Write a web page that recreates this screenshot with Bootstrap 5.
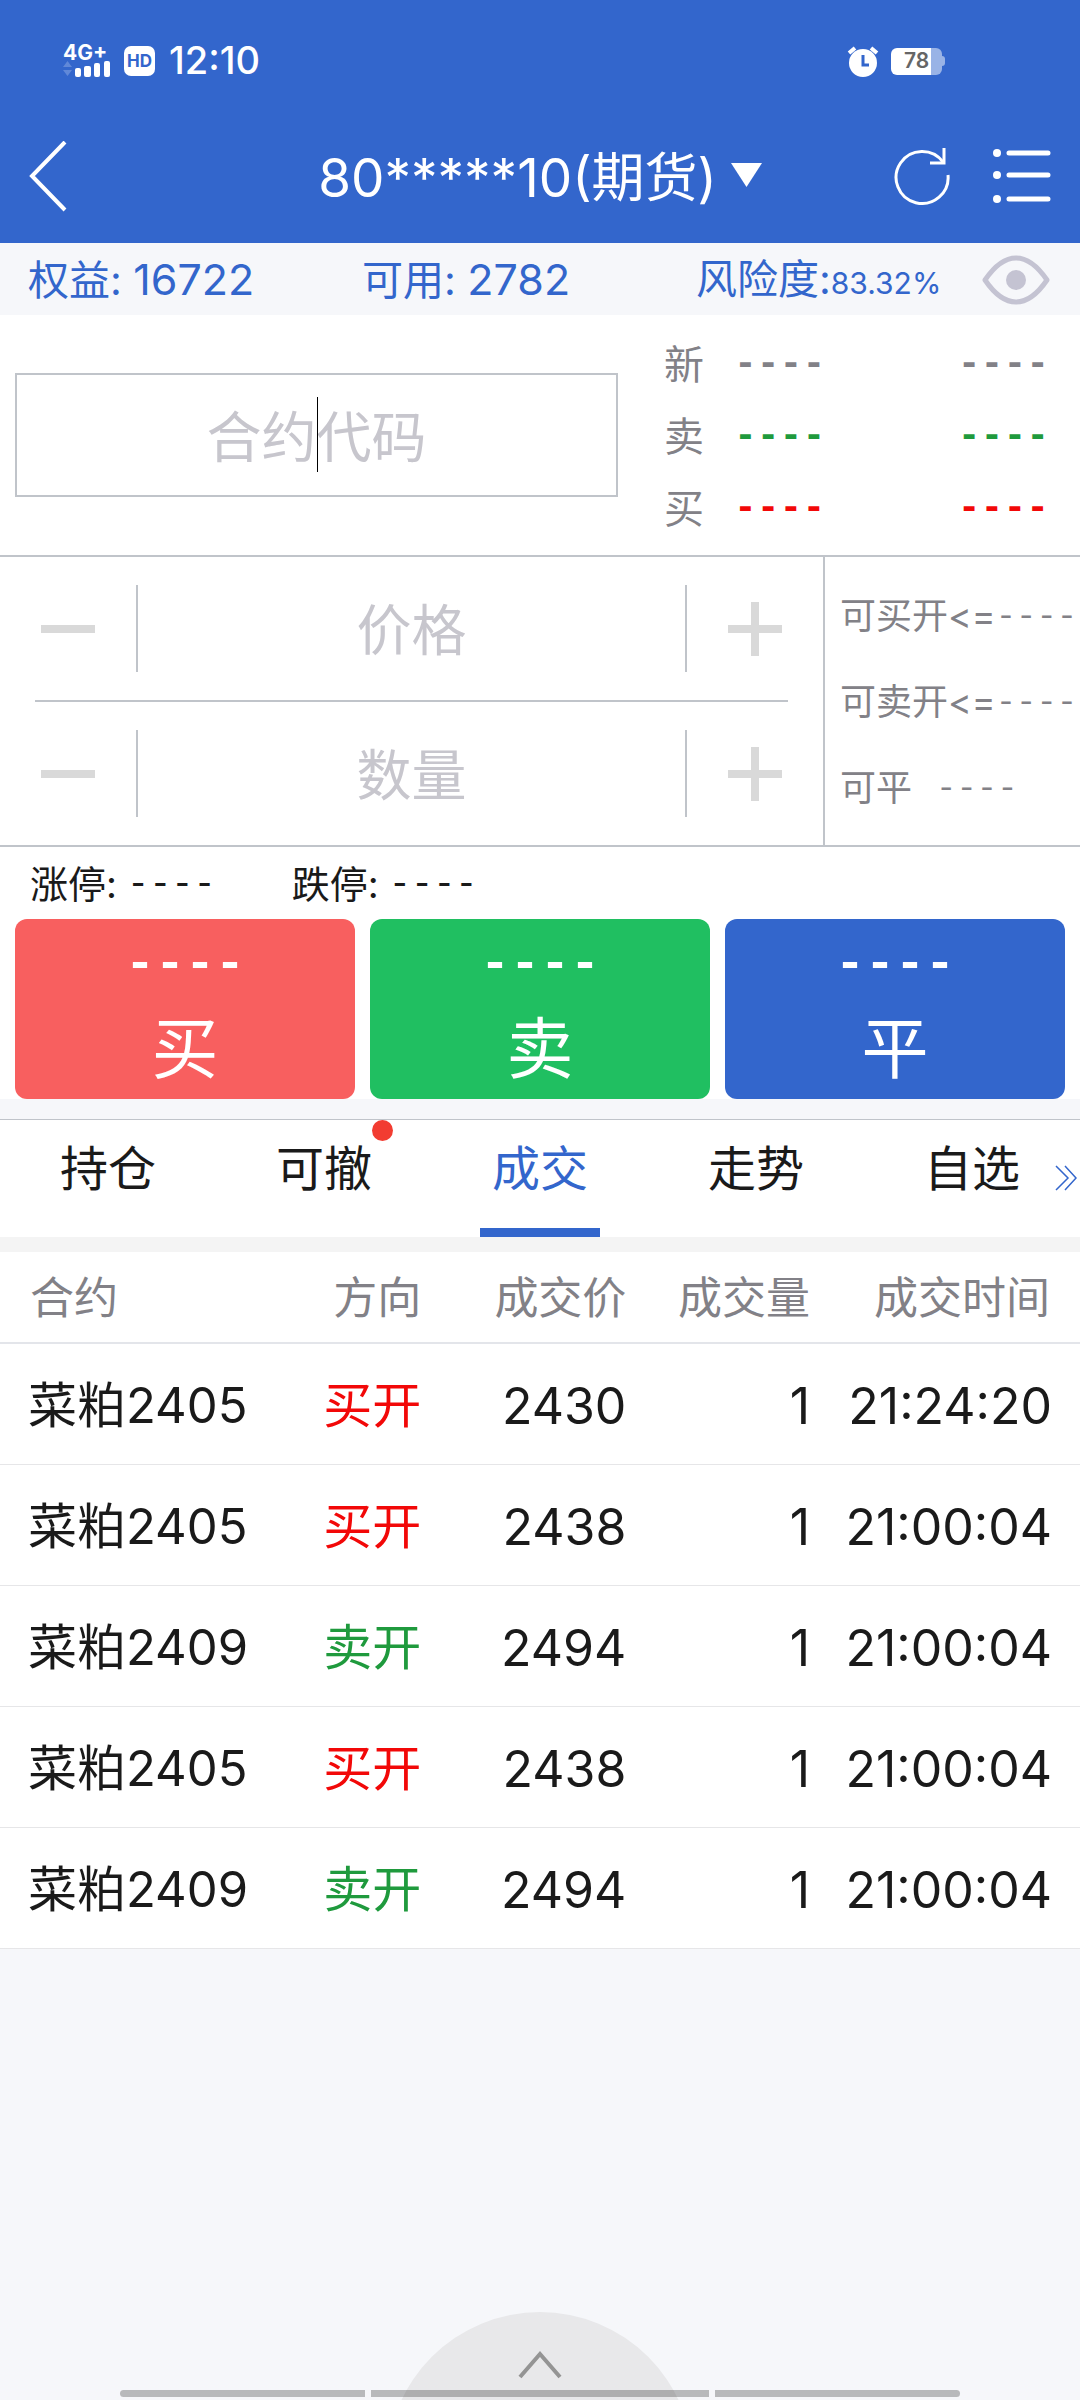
<!DOCTYPE html>
<html lang="zh-CN">
<head>
<meta charset="utf-8">
<meta name="viewport" content="width=device-width, initial-scale=1">
<title>期货交易</title>
<link href="https://cdn.jsdelivr.net/npm/bootstrap@5.3.0/dist/css/bootstrap.min.css" rel="stylesheet">
<style>
  :root { --blue: #3366cc; --line: #c0c4ca; --muted: #828187; --hint: #c7c6cd; --ink: #1a1a1a; --up: #f20808; --down: #1f9a3d; --page: #f6f7fa; }
  body { font-family: Inter, "Noto Sans CJK SC", sans-serif; color: var(--ink); background: var(--page); font-size: 48px; line-height: 1.2; }
  svg { display: block; flex: none; }
  button { font: inherit; color: inherit; background: none; border: 0; padding: 0; }
  .dashes { font-family: "Liberation Mono", monospace; line-height: 1; }

  .app-head { background: var(--blue); color: #fff; }
  .status-row { height: 110px; padding: 12px 135px 0 63px; font-size: 38px; font-weight: 500; }
  .status-left { gap: 14px; }
  .net-label { font-size: 21px; line-height: 16px; font-weight: 700; }
  .hd-tag { width: 31px; height: 30px; border-radius: 7px; background: #fff; color: var(--blue); font-size: 17px; font-weight: 700; }
  .battery { width: 51px; height: 27px; border-radius: 6px; background: linear-gradient(90deg, #fff 78%, #99b3e6 78%); color: #666; font-size: 21px; font-weight: 600; }
  .battery-tip { width: 3px; height: 10px; border-radius: 0 3px 3px 0; background: #99b3e6; }
  .title-row { display: grid; grid-template-columns: 1fr auto 1fr; align-items: center; height: 133px; padding: 0 28px; }
  .account { font-size: 53px; gap: 14px; padding-top: 4px; }
  .head-tools { gap: 42px; }

  .funds { height: 72px; padding: 1px 30px 0 28px; color: var(--blue); font-size: 41px; }
  .funds .fund-item { flex: 0 0 334px; }
  .amount { font-size: 43px; }
  .risk-rate { font-size: 30px; }

  .sheet { background: #fff; }
  .quote { height: 242px; border-bottom: 2px solid var(--line); padding-left: 15px; }
  .code-box { flex: 1 1 0; }
  .code-input { height: 124px; border: 2px solid var(--line); border-radius: 0; text-align: center; font-size: 55px; padding: 3px 0 0; }
  .code-box::after { content: ""; position: absolute; left: 50%; top: 24px; width: 1px; height: 75px; background: #000; }
  .code-input::placeholder, .step-input::placeholder { color: var(--hint); opacity: 1; }
  .quote-list { flex: 0 0 462px; padding: 3px 31px 0 46px; font-size: 40px; color: var(--muted); }
  .quote-list li { height: 72px; }
  .quote-list .dashes { font-size: 38px; font-weight: 700; }
  .quote-list .tag-name { width: 70px; }

  .ticket { border-bottom: 2px solid var(--line); }
  .step-row { height: 143px; }
  .step-row button { flex: 0 0 136px; }
  .step-input { height: 87px; border: solid var(--line); border-width: 0 2px; border-radius: 0; text-align: center; font-size: 55px; padding: 3px 0 0; min-width: 0; }
  .step-rule { height: 2px; margin: 0 35px; background: var(--line); }
  .caps { flex: 0 0 257px; border-left: 2px solid var(--line); padding: 3px 0 0 15px; font-size: 36px; color: var(--muted); white-space: nowrap; }
  .caps li { height: 86px; }
  .caps .dashes { font-size: 34px; }

  .limits { height: 72px; padding: 3px 30px 0; font-size: 38px; gap: 76px; }
  .limits .dashes { font-size: 37px; margin-left: 10px; }
  .trade-row { display: grid; grid-template-columns: repeat(3, 1fr); gap: 15px; padding: 0 15px; }
  .trade-btn { height: 180px; border-radius: 12px; color: #fff; font-size: 67px; line-height: 78px; padding-top: 20px; }
  .trade-btn .dashes { font-size: 50px; line-height: 52px; font-weight: 700; margin-bottom: 19px; }
  .buy { background: #f85f5f; } .sell { background: #20bf61; } .flat { background: var(--blue); }

  .tab-strip { margin-top: 20px; border-top: 1px solid var(--line); border-bottom: 15px solid #f4f4f4; }
  .tab-strip .nav-link { color: var(--ink); height: 117px; padding: 0; font-size: 48px; line-height: 98px; border-radius: 0; }
  .tab-strip .nav-link.active { color: var(--blue); }
  .tab-strip .nav-link.active::after { content: ""; position: absolute; left: 50%; bottom: 0; width: 120px; height: 9px; margin-left: -60px; background: var(--blue); }
  .new-dot { position: absolute; left: 156px; top: 0; width: 21px; height: 21px; border-radius: 50%; background: #f23c31; }
  .more-tabs { position: absolute; right: 3px; top: 45px; }

  .deals { table-layout: fixed; width: 100%; border-collapse: collapse; white-space: nowrap; }
  .deals th { height: 91px; padding: 3px 0 0; border-bottom: 2px solid #e3e5ea; font-size: 44px; font-weight: 400; color: var(--muted); }
  .deals td { height: 121px; padding: 5px 0 0; border-bottom: 1px solid #e6e6e8; font-size: 49px; }
  .deals td.num-cell { font-size: 50px; }
  .deals tr > :first-child { padding-left: 28px; }
  .deals tr > :last-child { padding-right: 28px; }
  .deals tr > th:first-child, .deals tr > th:last-child { padding-left: 30px; padding-right: 30px; }
  .is-up { color: var(--up); } .is-down { color: var(--down); }

  .dock { height: 88px; }
  .drawer-knob { position: absolute; left: 50%; top: 0; width: 306px; height: 306px; margin-left: -153px; border-radius: 50%; background: #e8e8ea; }
  .drawer-knob svg { margin: 38px auto 0; }
  .sys-bar { position: absolute; left: 0; right: 0; bottom: 3px; padding: 0 120px; gap: 6px; }
  .sys-bar i { height: 7px; background: rgba(0,0,0,.25); flex: 245 1 0; }
  .sys-bar i:nth-child(2) { flex-grow: 338; }
  .sys-bar i:first-child { border-radius: 4px 0 0 4px; } .sys-bar i:last-child { border-radius: 0 4px 4px 0; }
</style>
</head>
<body>
<div class="d-flex flex-column min-vh-100">
  <header class="app-head">
    <div class="status-row d-flex align-items-center justify-content-between">
      <div class="status-left d-flex align-items-center">
        <div class="d-flex flex-column">
          <span class="net-label">4G+</span>
          <svg width="47" height="16" viewBox="0 0 47 16" aria-hidden="true"><path d="M0 6 4.500 0 9 6zM0 9h9l-4.500 6z" fill="#6088d8"/><g fill="#fff"><rect x="12" y="7" width="6" height="9" rx="2"/><rect x="21" y="5" width="7" height="11" rx="2"/><rect x="31" y="2" width="6" height="14" rx="2"/><rect x="41" y="0" width="6" height="16" rx="2"/></g></svg>
        </div>
        <span class="hd-tag d-flex align-items-center justify-content-center">HD</span>
        <span>12:10</span>
      </div>
      <div class="d-flex align-items-center">
        <svg class="me-2" width="32" height="32" viewBox="0 0 32 32" aria-label="闹钟"><circle cx="16" cy="18" r="14" fill="#fff"/><path d="M2 8 8 3M30 8l-6-5" stroke="#fff" stroke-width="4"/><path d="M16 10v10h6" fill="none" stroke="#3366cc" stroke-width="3"/></svg>
        <span class="battery d-flex align-items-center justify-content-center ms-1">78</span><span class="battery-tip"></span>
      </div>
    </div>
    <div class="title-row">
      <button type="button" class="text-start" aria-label="返回"><svg width="40" height="72" viewBox="0 0 40 72"><path d="M37 1 4 35l33 34" fill="none" stroke="#fff" stroke-width="4"/></svg></button>
      <button type="button" class="account d-flex align-items-center">80*****10(期货)<svg width="31" height="32" viewBox="0 0 31 32"><path d="M0 0h31L15.500 24z" fill="#fff"/></svg></button>
      <div class="head-tools d-flex align-items-center justify-content-end">
        <button type="button" aria-label="刷新"><svg width="56" height="58" viewBox="0 0 56 58"><path d="M54 27A26 26 0 1 1 49 14" fill="none" stroke="#fff" stroke-width="3"/><path d="M36 15h14V0" fill="none" stroke="#fff" stroke-width="3"/></svg></button>
        <button type="button" aria-label="菜单"><svg width="60" height="58" viewBox="0 0 60 58"><g fill="#fff"><circle cx="5" cy="5" r="4"/><circle cx="5" cy="27" r="4"/><circle cx="5" cy="51" r="4"/></g><path d="M17 5h39M17 27h39M17 51h39" stroke="#fff" stroke-width="5" stroke-linecap="round"/></svg></button>
      </div>
    </div>
  </header>

  <section class="funds d-flex align-items-center">
    <div class="fund-item">权益: <span class="amount">16722</span></div>
    <div class="fund-item">可用: <span class="amount">2782</span></div>
    <div class="text-nowrap">风险度:<span class="risk-rate">83.32%</span></div>
    <button type="button" class="ms-auto" aria-label="显示或隐藏资金"><svg width="68" height="50" viewBox="0 0 68 50"><path d="M3 25Q18 3 34 3t31 22Q50 47 34 47T3 25z" fill="none" stroke="#c4c3d2" stroke-width="5" stroke-linejoin="round"/><circle cx="34" cy="25" r="10" fill="#c4c3d2"/></svg></button>
  </section>

  <section class="sheet">
    <div class="quote d-flex align-items-center">
      <div class="code-box position-relative">
        <input class="code-input form-control shadow-none" type="text" placeholder="合约代码" aria-label="合约代码">
      </div>
      <ul class="quote-list list-unstyled mb-0">
        <li class="d-flex align-items-center"><span class="tag-name">新</span><span class="dashes">----</span><span class="dashes ms-auto">----</span></li>
        <li class="d-flex align-items-center"><span class="tag-name">卖</span><span class="dashes is-down">----</span><span class="dashes is-down ms-auto">----</span></li>
        <li class="d-flex align-items-center"><span class="tag-name">买</span><span class="dashes is-up">----</span><span class="dashes is-up ms-auto">----</span></li>
      </ul>
    </div>

    <div class="ticket d-flex">
      <div class="flex-grow-1">
        <div class="step-row d-flex align-items-center">
          <button type="button" aria-label="价格减"><svg class="mx-auto" width="54" height="54" viewBox="0 0 54 54"><path d="M0 27h54" stroke="#d9d9d9" stroke-width="8"/></svg></button>
          <input class="step-input form-control shadow-none" type="text" placeholder="价格" aria-label="价格">
          <button type="button" aria-label="价格加"><svg class="mx-auto" width="54" height="54" viewBox="0 0 54 54"><path d="M0 27h54M27 0v54" stroke="#d9d9d9" stroke-width="8"/></svg></button>
        </div>
        <div class="step-rule"></div>
        <div class="step-row d-flex align-items-center">
          <button type="button" aria-label="数量减"><svg class="mx-auto" width="54" height="54" viewBox="0 0 54 54"><path d="M0 27h54" stroke="#d9d9d9" stroke-width="8"/></svg></button>
          <input class="step-input form-control shadow-none" type="text" placeholder="数量" aria-label="数量">
          <button type="button" aria-label="数量加"><svg class="mx-auto" width="54" height="54" viewBox="0 0 54 54"><path d="M0 27h54M27 0v54" stroke="#d9d9d9" stroke-width="8"/></svg></button>
        </div>
      </div>
      <ul class="caps list-unstyled mb-0 d-flex flex-column justify-content-center">
        <li class="d-flex align-items-center">可买开&lt;=<span class="dashes">----</span></li>
        <li class="d-flex align-items-center">可卖开&lt;=<span class="dashes">----</span></li>
        <li class="d-flex align-items-center">可平<span class="dashes ms-4">----</span></li>
      </ul>
    </div>

    <div class="limits d-flex align-items-center">
      <div class="d-flex align-items-center">涨停:<span class="dashes">----</span></div>
      <div class="d-flex align-items-center">跌停:<span class="dashes">----</span></div>
    </div>
    <div class="trade-row">
      <button type="button" class="trade-btn buy d-flex flex-column align-items-center"><span class="dashes">----</span>买</button>
      <button type="button" class="trade-btn sell d-flex flex-column align-items-center"><span class="dashes">----</span>卖</button>
      <button type="button" class="trade-btn flat d-flex flex-column align-items-center"><span class="dashes">----</span>平</button>
    </div>
  </section>

  <nav class="tab-strip sheet position-relative" aria-label="列表">
    <div class="nav nav-justified flex-nowrap">
      <a class="nav-link position-relative" href="#">持仓</a>
      <a class="nav-link position-relative" href="#">可撤<span class="new-dot"></span></a>
      <a class="nav-link position-relative active" aria-current="page" href="#">成交</a>
      <a class="nav-link position-relative" href="#">走势</a>
      <a class="nav-link position-relative" href="#">自选</a>
    </div>
    <svg class="more-tabs" width="22" height="26" viewBox="0 0 22 26" aria-hidden="true"><path d="M1 1l12 12L1 25M10 1l11 12L10 25" fill="none" stroke="#3366cc" stroke-width="1.500"/></svg>
  </nav>

  <table class="deals sheet">
    <colgroup><col style="width:24%"><col style="width:15%"><col style="width:19%"><col style="width:17%"><col style="width:25%"></colgroup>
    <thead><tr><th scope="col">合约</th><th scope="col" class="text-end">方向</th><th scope="col" class="text-end">成交价</th><th scope="col" class="text-end">成交量</th><th scope="col" class="text-end">成交时间</th></tr></thead>
    <tbody>
      <tr><td>菜粕2405</td><td class="text-end is-up">买开</td><td class="num-cell text-end">2430</td><td class="num-cell text-end">1</td><td class="num-cell text-end">21:24:20</td></tr>
      <tr><td>菜粕2405</td><td class="text-end is-up">买开</td><td class="num-cell text-end">2438</td><td class="num-cell text-end">1</td><td class="num-cell text-end">21:00:04</td></tr>
      <tr><td>菜粕2409</td><td class="text-end is-down">卖开</td><td class="num-cell text-end">2494</td><td class="num-cell text-end">1</td><td class="num-cell text-end">21:00:04</td></tr>
      <tr><td>菜粕2405</td><td class="text-end is-up">买开</td><td class="num-cell text-end">2438</td><td class="num-cell text-end">1</td><td class="num-cell text-end">21:00:04</td></tr>
      <tr><td>菜粕2409</td><td class="text-end is-down">卖开</td><td class="num-cell text-end">2494</td><td class="num-cell text-end">1</td><td class="num-cell text-end">21:00:04</td></tr>
    </tbody>
  </table>

  <footer class="dock position-relative overflow-hidden mt-auto">
    <button type="button" class="drawer-knob d-flex align-items-start" aria-label="展开"><svg width="46" height="30" viewBox="0 0 46 30"><path d="M3 27 23 4l20 23" fill="none" stroke="#949494" stroke-width="4"/></svg></button>
    <div class="sys-bar d-flex" aria-hidden="true"><i></i><i></i><i></i></div>
  </footer>
</div>
<script src="https://cdn.jsdelivr.net/npm/bootstrap@5.3.0/dist/js/bootstrap.bundle.min.js"></script>
</body>
</html>
